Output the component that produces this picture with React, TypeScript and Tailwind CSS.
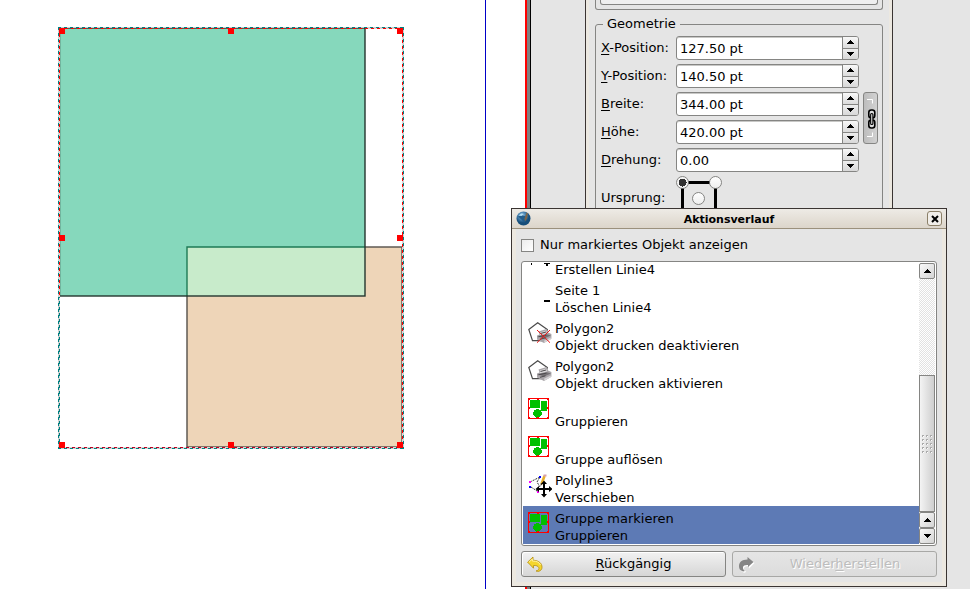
import React, { useState } from 'react';

type IconKind = 'lineAdd' | 'lineRemove' | 'noPrint' | 'print' | 'group' | 'move';

const history: { icon: IconKind; target: string; action: string }[] = [
  { icon: 'lineRemove', target: 'Seite 1', action: 'Löschen Linie4' },
  { icon: 'noPrint', target: 'Polygon2', action: 'Objekt drucken deaktivieren' },
  { icon: 'print', target: 'Polygon2', action: 'Objekt drucken aktivieren' },
  { icon: 'group', target: '', action: 'Gruppieren' },
  { icon: 'group', target: '', action: 'Gruppe auflösen' },
  { icon: 'move', target: 'Polyline3', action: 'Verschieben' },
  { icon: 'group', target: 'Gruppe markieren', action: 'Gruppieren' },
];

const fields = [
  { id: 'xpos', key: 'X', rest: '-Position:', value: '127.50 pt' },
  { id: 'ypos', key: 'Y', rest: '-Position:', value: '140.50 pt' },
  { id: 'width', key: 'B', rest: 'reite:', value: '344.00 pt' },
  { id: 'height', key: 'H', rest: 'öhe:', value: '420.00 pt' },
  { id: 'rotation', key: 'D', rest: 'rehung:', value: '0.00' },
];

const handles = [
  [59, 28], [228, 28], [397, 28],
  [59, 235], [397, 235],
  [59, 442], [228, 442], [397, 442],
];

function Triangle({ down = false }: { down?: boolean }) {
  return (
    <svg width="7" height="4" viewBox="0 0 7 4" shapeRendering="crispEdges" aria-hidden="true">
      {down ? (
        <path d="M0 0h7v1h-1v1h-1v1h-1v1h-1v-1h-1v-1h-1v-1h-1z" />
      ) : (
        <path d="M0 4h7v-1h-1v-1h-1v-1h-1v-1h-1v1h-1v1h-1v1h-1z" />
      )}
    </svg>
  );
}

function PrinterShape({ crossed = false }: { crossed?: boolean }) {
  return (
    <>
      <path d="M9.700 .8 19.300 7.500 16 18.700H4.500L.8 7.500z" fill="none" stroke="#4a4a4a" strokeWidth="1.200" />
      <path d="M10.500 9.500 18.500 7l1.500 3.500 3.400 1.500v4.800L16 21l-7-3.600v-4l2.500-1z" fill="#a9a5a9" />
      <path d="M12 10.500 18 8.500l1 3-7 1.800z" fill="#dcdadc" />
      <path d="M9.200 14.300 19 12.200l4 1.200-7 3z" fill="#757175" />
      <path d="M12.500 11.500 18 10M10.500 14.800l8-1.700M12 17.300l5.500-1.500" stroke="#4e4b4e" />
      <path d="M16 18.800 22.800 15.600v1.600L16.500 20.600z" fill="#d7d4d7" />
      {crossed && (
        <path d="M9 8 22 20.700M22 8 9 20.700" stroke="#ef1414" />
      )}
    </>
  );
}

function HistoryIcon({ kind }: { kind: IconKind }) {
  return (
    <svg className="mt-1.5 h-6 w-6 shrink-0" viewBox="0 0 24 24" aria-hidden="true">
      {kind === 'lineAdd' && (
        <path d="M3 17h1v2h-1zM16 17h6v1h-2v2h-2v-2h-2z" shapeRendering="crispEdges" />
      )}
      {kind === 'lineRemove' && <path d="M16 16h6v2h-6z" shapeRendering="crispEdges" />}
      {kind === 'noPrint' && <PrinterShape crossed />}
      {kind === 'print' && <PrinterShape />}
      {kind === 'group' && (
        <>
          <rect x=".5" y=".5" width="20" height="20" fill="none" stroke="#f00" />
          <path d="M2 2h10v8h-10zM13 3h6v10h-6zM8 11h3v1h2v2h1v3h-1v1h-1v1h-1v1h-3v-1h-1v-1h-1v-1h-1v-3h1v-2h2z" fill="#00c000" shapeRendering="crispEdges" />
          <path d="M0 0h2v2h-2zM19 0h2v2h-2zM0 19h2v2h-2zM19 19h2v2h-2zM9 0h2v2h-2zM9 19h2v2h-2zM0 9h2v2h-2zM19 9h2v2h-2z" fill="#f00" shapeRendering="crispEdges" />
        </>
      )}
      {kind === 'move' && (
        <>
          <path d="M2 8 12 3l-3 5 3 5M3 13l6 4" fill="none" stroke="#333" strokeDasharray="2 1" />
          <path d="M16.500 2 13.500 10" stroke="#e8b02c" strokeWidth="2.600" />
          <path d="M15.500.5h3v2h-3z" fill="#d9a0a8" />
          <path d="M12.800 9.200 14.500 10l-2 2z" fill="#30200a" />
          <path d="M1 7h2v2h-2zM9 17h2v2h-2z" fill="#f0f" />
          <path d="M1 12h2v2h-2zM11 2h2v2h-2z" fill="#00f" />
          <path d="M15 10v4h-4v-2l-3.500 3 3.500 3v-2h4v4h-2l3 3.500 3-3.500h-2v-4h4v2l3.500-3-3.500-3v2h-4v-4h2l-3-3.500-3 3.500z" />
        </>
      )}
    </svg>
  );
}

function SpinBox({ id, value }: { id: string; value: string }) {
  return (
    <div className="flex h-6 min-w-0 overflow-hidden rounded-[3px] border border-[#858583] bg-white shadow-[inset_0_1px_0_#c8c8c6]">
      <input id={id} defaultValue={value} className="w-full min-w-0 flex-1 bg-transparent pt-0.5 pl-[3px] outline-none" />
      <div className="flex w-4 shrink-0 flex-col border-l border-[#858583]">
        <button aria-label="Erhöhen" className="flex flex-1 items-center justify-center border-b border-[#858583] bg-linear-to-b from-[#f8f8f8] to-[#dcdcdc]">
          <Triangle />
        </button>
        <button aria-label="Verringern" className="flex flex-1 items-center justify-center bg-linear-to-b from-[#eeeeee] to-[#d8d8d8]">
          <Triangle down />
        </button>
      </div>
    </div>
  );
}

function Origin() {
  const [point, setPoint] = useState(0);
  const radio =
    'absolute h-[13px] w-[13px] appearance-none rounded-full border border-[#858583] bg-linear-to-b from-white to-[#eeeeee] checked:bg-[radial-gradient(circle,#303030_0_4px,#f4f4f4_4px)]';
  return (
    <div className="relative h-12 w-10" role="radiogroup" aria-labelledby="origin">
      <div className="absolute top-[5px] left-[5px] h-9 w-9 border-[3px] border-black" />
      <input type="radio" name="origin" aria-label="Oben links" checked={point === 0} onChange={() => setPoint(0)} className={`${radio} top-0 left-0`} />
      <input type="radio" name="origin" aria-label="Oben rechts" checked={point === 1} onChange={() => setPoint(1)} className={`${radio} top-0 left-[33px]`} />
      <input type="radio" name="origin" aria-label="Mitte" checked={point === 2} onChange={() => setPoint(2)} className={`${radio} top-4 left-4`} />
    </div>
  );
}

function Canvas() {
  return (
    <svg className="block h-[460px] w-[420px]" viewBox="0 0 420 460" role="img" aria-label="Seite mit gruppierten Rechtecken">
      <rect x="187" y="247" width="215" height="200" fill="#eed5b8" stroke="#55504a" strokeWidth="1.400" />
      <rect x="59" y="28" width="306" height="268" fill="#86d8bc" />
      <rect x="187" y="247" width="178" height="49" fill="#c8ebcb" />
      <path d="M187 296v-49h178" fill="none" stroke="#1e7a55" strokeWidth="1.400" />
      <rect x="59.500" y="28" width="305.500" height="268" fill="none" stroke="#24352e" strokeWidth="1.400" />
      <g fill="none" shapeRendering="crispEdges">
        <rect x="58.500" y="27.500" width="345" height="421" stroke="#cfcfcf" />
        <path d="M59.500 28v420M59 447.500h344M402.500 28v420M366 28.500h37" stroke="#d8d8d8" />
        <path d="M59.500 297v151" stroke="#008080" strokeDasharray="3 3" strokeDashoffset="2" />
        <path d="M402.500 28v419M59 28.500h344M59.500 28v268" stroke="#f00" strokeDasharray="3 3" />
        <path d="M60 447.500h343" stroke="#c00020" strokeDasharray="3 3" />
        <path d="M58 27.500h346M58 448.500h346M58.500 27v422M403.500 27v422" stroke="#008080" strokeDasharray="3 3" />
      </g>
      {handles.map(([x, y]) => (
        <rect key={`${x}-${y}`} x={x} y={y} width="6" height="6" fill="#f00" />
      ))}
    </svg>
  );
}

function PropertiesPanel() {
  return (
    <aside className="absolute top-0 left-[54px] h-[420px] w-[308px] border-x border-[#3a3432] bg-[#e5e5e5]">
      <div className="h-full border-x-[3px] border-[#ece8e0] px-1.5">
        <div className="h-2.5 rounded-b-[3px] border border-t-0 border-[#858583] px-1">
          <div className="h-[5px] rounded-b-[3px] border border-t-0 border-[#858583] bg-[#efefef]" />
        </div>
        <fieldset className="mt-1 rounded-[3px] border border-[#858583] pr-1 pb-4 pl-[5px]">
          <legend className="ml-0.5 px-1 leading-5">Geometrie</legend>
          <div className="mt-0.5 grid grid-cols-[75px_minmax(0,183px)_15px] gap-y-1">
            {fields.map((f, i) => (
              <React.Fragment key={f.id}>
                <label htmlFor={f.id} className="col-start-1 leading-6 whitespace-nowrap">
                  <span className="underline underline-offset-2">{f.key}</span>
                  {f.rest}
                </label>
                <SpinBox id={f.id} value={f.value} />
                {i === 2 && (
                  <button aria-label="Seitenverhältnis sperren" aria-pressed="true" className="row-span-2 ml-1 w-[15px] rounded-[3px] border border-[#858583] bg-linear-to-r from-[#bdbdbd] to-[#d2d2d2]">
                    <svg width="13" height="50" viewBox="0 0 13 50" fill="none" aria-hidden="true">
                      <path d="M3 6.500h5.500v4M3 43.500h5.500v-4" stroke="#fff" />
                      <g stroke="#000" strokeWidth="1.600">
                        <rect x="4.800" y="17" width="6" height="8" rx="2.500" fill="#ddd" />
                        <rect x="4.800" y="27" width="6" height="8" rx="2.500" fill="#ddd" />
                        <rect x="6.700" y="20.500" width="2.200" height="11" rx="1" fill="#fff" strokeWidth="1.200" />
                      </g>
                    </svg>
                  </button>
                )}
              </React.Fragment>
            ))}
            <span id="origin" className="col-start-1 pt-3">Ursprung:</span>
            <Origin />
          </div>
        </fieldset>
      </div>
    </aside>
  );
}

function ScrollBar() {
  const btn = 'flex h-4 shrink-0 items-center justify-center rounded-[2px] border border-[#858583] bg-linear-to-br from-[#fafafa] to-[#d4d4d4]';
  return (
    <div className="flex w-4 shrink-0 flex-col bg-[repeating-conic-gradient(#e2e2e2_0_25%,#ffffff_0_50%)] bg-[length:2px_2px]">
      <button aria-label="Nach oben" className={btn}><Triangle /></button>
      <div className="flex-1" />
      <div className="flex h-[137px] items-center justify-center border border-[#858583] bg-linear-to-r from-[#f4f4f4] to-[#cfcfcf]">
        <div className="grid grid-cols-3 gap-0.5">
          {Array.from({ length: 15 }, (_, i) => (
            <span key={i} className="h-0.5 w-0.5 border-t border-l border-[#aaaaaa] bg-white" />
          ))}
        </div>
      </div>
      <button aria-label="Zurück" className={btn}><Triangle /></button>
      <button aria-label="Nach unten" className={btn}><Triangle down /></button>
    </div>
  );
}

function ActionHistory() {
  const [selected, setSelected] = useState(history.length - 1);
  return (
    <section aria-labelledby="history-title" className="absolute top-[208px] left-[511px] flex h-[379px] w-[436px] flex-col border border-[#3a3432] bg-[#ece8e0]">
      <header className="flex h-5 shrink-0 items-center border-b border-[#9b907c] bg-linear-to-b from-[#eeebe6] to-[#dcd5ca] px-1">
        <svg width="15" height="15" viewBox="0 0 15 15" aria-hidden="true">
          <defs>
            <radialGradient id="globe" cx=".4" cy=".3">
              <stop offset="0" stopColor="#a9d5ef" />
              <stop offset=".5" stopColor="#4c86b4" />
              <stop offset="1" stopColor="#174e7a" />
            </radialGradient>
          </defs>
          <circle cx="7.500" cy="7.500" r="7" fill="url(#globe)" />
          <path d="M2 5.500 5 4l4 1 2 3-3 4-2-3z" fill="#225c8a" />
          <path d="m10.500 1.500 1.500 1-1 5-2 3-.5-3z" fill="#7c6549" />
          <path d="m2.500 4.500 3-2 2 .5-2 2z" fill="#b9dff2" />
        </svg>
        <h1 id="history-title" className="flex-1 pt-0.5 text-center text-[11px] leading-4 font-bold">Aktionsverlauf</h1>
        <button aria-label="Schließen" className="flex h-[15px] w-[15px] items-center justify-center rounded-[3px] border border-[#8c8068] bg-[#f1eee9]">
          <svg width="8" height="8" viewBox="0 0 8 8" aria-hidden="true">
            <path d="m1 1 6 6M7 1 1 7" stroke="#000" strokeWidth="2" />
          </svg>
        </button>
      </header>
      <div className="mx-1 mb-1 flex min-h-0 flex-1 flex-col bg-[#e5e5e5] px-[5px] pb-[5px]">
        <label className="flex h-8 shrink-0 items-center gap-1.5">
          <input type="checkbox" className="h-[13px] w-[13px] appearance-none border border-[#858583] bg-linear-to-br from-[#ececec] to-white checked:bg-[#333333]" />
          Nur markiertes Objekt anzeigen
        </label>
        <div className="flex min-h-0 flex-1 rounded-[3px] border border-[#858583] bg-white p-px">
          <ul role="listbox" aria-labelledby="history-title" className="flex min-w-0 flex-1 flex-col justify-end overflow-hidden">
            <li role="option" aria-selected="false" className="flex h-[38px] shrink-0 gap-[3px] pl-[5px]">
              <HistoryIcon kind="lineAdd" />
              <div className="pt-[21px] leading-[17px]">Erstellen Linie4</div>
            </li>
            {history.map((entry, i) => (
              <li
                key={i}
                role="option"
                aria-selected={i === selected}
                onClick={() => setSelected(i)}
                className={`flex h-[38px] shrink-0 gap-[3px] pl-[5px] ${i === selected ? 'bg-[#5d7ab5]' : ''}`}
              >
                <HistoryIcon kind={entry.icon} />
                <div className="pt-1 leading-[17px]">
                  <div className="h-[17px]">{entry.target}</div>
                  <div>{entry.action}</div>
                </div>
              </li>
            ))}
          </ul>
          <ScrollBar />
        </div>
        <div className="mt-[5px] grid grid-cols-2 gap-1.5">
          <button className="flex h-[26px] items-center rounded-[3px] border border-[#858583] bg-linear-to-b from-[#f2f2f2] to-[#d6d6d6] px-[5px] shadow-[inset_1px_1px_0_#ffffff]">
            <svg width="16" height="16" viewBox="0 0 16 16" aria-hidden="true">
              <path d="M.6 6.200 6 1v3.200c6 .2 9 3.300 9 7 0 2-1 3.500-3.500 4.200l-2.500-.4c2.500-.7 3.500-2 2.700-3.600C11 10 9.200 9.300 6.500 9.500v2.700z" fill="#f4d52d" stroke="#b58e0c" strokeWidth=".8" />
              <path d="M2 6.200 5.300 3v2c4.500 0 7 1.300 8.200 4" fill="none" stroke="#fff2a2" />
            </svg>
            <span className="flex-1 pl-1"><span className="underline underline-offset-2">R</span>ückgängig</span>
          </button>
          <button disabled className="flex h-[26px] items-center rounded-[3px] border border-[#a8a8a6] bg-linear-to-b from-[#e5e5e5] to-[#dcdcdc] px-[5px] text-[#bdbdbd] [text-shadow:1px_1px_0_#ffffff]">
            <svg width="17" height="17" viewBox="0 0 17 17" aria-hidden="true">
              <path d="M16.500 7 11 12.500V10c-3-.2-4.500.6-5 2-.3 1.500.5 2.500 2 3.500l-1 1.300C3 16 2 13.500 2 11c0-4 3-6.500 8.500-6.500V2z" fill="#fff" />
              <path d="M15.500 6 10 11V9c-3-.2-4.700.6-5 2.200-.2 1.500.5 2.800 2 3.800l-2 .5C2 14.500 1 12.500 1 10.200 1 6 4 3.600 9.500 3.500V1z" fill="#858585" />
            </svg>
            <span className="flex-1 pl-1">Wieder<span className="underline underline-offset-2">h</span>erstellen</span>
          </button>
        </div>
      </div>
    </section>
  );
}

export default function App() {
  return (
    <main className="relative flex h-screen overflow-hidden bg-white font-['DejaVu_Sans','Noto_Sans',sans-serif] text-[13px] text-black">
      <div className="w-[486px] shrink-0 border-r border-[#0000c8]">
        <Canvas />
      </div>
      <div className="w-[39px] shrink-0" />
      <div className="w-0.5 shrink-0 bg-[#ff0000]" />
      <div className="w-1 shrink-0 border-r border-black bg-[#808080]" />
      <div className="relative min-w-0 flex-1 bg-[#e5e5e5]">
        <PropertiesPanel />
      </div>
      <ActionHistory />
    </main>
  );
}
